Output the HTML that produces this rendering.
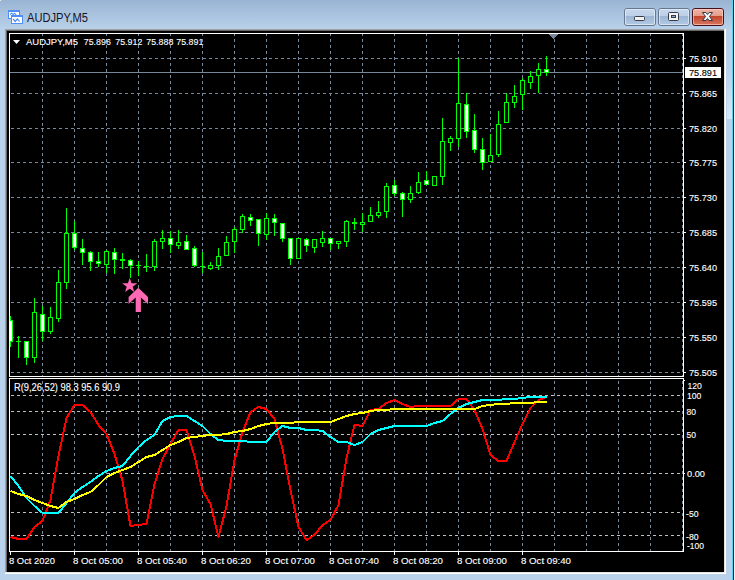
<!DOCTYPE html>
<html><head><meta charset="utf-8"><style>
html,body{margin:0;padding:0;}
body{width:735px;height:580px;overflow:hidden;position:relative;background:#b9d1ea;font-family:"Liberation Sans",sans-serif;}
.tb{position:absolute;left:0;top:0;width:735px;height:29px;background:linear-gradient(#99b4d3,#b9d1ea);}
</style></head><body>
<div class="tb"></div>
<svg style="position:absolute;left:0;top:0" width="735" height="580" viewBox="0 0 735 580">
<rect x="5" y="29" width="721" height="545" fill="#fff"/>
<rect x="5" y="29" width="720" height="544" fill="#e3e3e3"/>
<rect x="5" y="29" width="719" height="543" fill="#a0a0a0"/>
<rect x="6" y="30" width="718" height="542" fill="#696969"/>
<rect x="7" y="31" width="717" height="541" fill="#000"/>
<defs><linearGradient id="gs" x1="0" y1="0" x2="0" y2="1"><stop offset="0" stop-color="#b9d1ea"/><stop offset="1" stop-color="#dae7f4"/></linearGradient></defs>
<rect x="727" y="70" width="5" height="49" fill="url(#gs)"/>
<rect x="0" y="0" width="1" height="1" fill="#f4efe4"/>
<rect x="732" y="0" width="1" height="580" fill="#5bd0f0"/>
<rect x="733" y="0" width="1" height="580" fill="#1a2a3a"/>
<rect x="734" y="0" width="1" height="580" fill="#e8eef4"/>
</svg>
<svg style="position:absolute;left:0;top:0" width="735" height="580" viewBox="0 0 735 580">
<defs>
<linearGradient id="gb" x1="0" y1="0" x2="0" y2="1"><stop offset="0" stop-color="#c8d9ee"/><stop offset="0.45" stop-color="#bccfe7"/><stop offset="0.46" stop-color="#9cb5d3"/><stop offset="1" stop-color="#b4cbe6"/></linearGradient>
<linearGradient id="gr" x1="0" y1="0" x2="0" y2="1"><stop offset="0" stop-color="#efb5a5"/><stop offset="0.45" stop-color="#e49c8a"/><stop offset="0.46" stop-color="#c2442a"/><stop offset="1" stop-color="#da7a62"/></linearGradient>
</defs>
<rect x="624.5" y="8.5" width="31" height="17" rx="2.5" fill="url(#gb)" stroke="#66778e"/>
<rect x="625.5" y="9.5" width="29" height="15" rx="1.5" fill="none" stroke="#e6f0fa" stroke-opacity="0.7"/>
<rect x="658.5" y="8.5" width="31" height="17" rx="2.5" fill="url(#gb)" stroke="#66778e"/>
<rect x="659.5" y="9.5" width="29" height="15" rx="1.5" fill="none" stroke="#e6f0fa" stroke-opacity="0.7"/>
<rect x="692.5" y="8.5" width="31" height="17" rx="2.5" fill="url(#gr)" stroke="#46101e"/>
<rect x="693.5" y="9.5" width="29" height="15" rx="1.5" fill="none" stroke="#ffd8cc" stroke-opacity="0.6"/>
<rect x="634.5" y="16.5" width="10" height="4" rx="1" fill="#f2f2f0" stroke="#363c4c"/>
<rect x="668.5" y="12.5" width="10" height="8" rx="1" fill="#f2f2f0" stroke="#363c4c"/>
<rect x="671.5" y="15.5" width="4" height="2" fill="#8eaacb" stroke="#363c4c"/>
<path d="M702.5 12.5H705.9L707.5 14.4L709.1 12.5H712.5L709.5 16.5L712.5 20.5H709.1L707.5 18.6L705.9 20.5H702.5L705.5 16.5Z" fill="#f2f2f2" stroke="#2e3848" stroke-width="1" stroke-linejoin="round"/>

<g shape-rendering="crispEdges">
<rect x="8.5" y="10.5" width="11" height="8" fill="#fff" stroke="#4f8ef7"/>
<rect x="8" y="10" width="12" height="2" fill="#4f8ef7"/>
<rect x="11.5" y="15.5" width="11" height="8" fill="#fff" stroke="#4f8ef7"/>
<rect x="11" y="15" width="12" height="2" fill="#4f8ef7"/>
</g>
<path d="M13 18.8L15.2 21.5L17.3 18.8L19.6 21.5" fill="none" stroke="#3f86f5" stroke-width="1.1"/>
<path d="M10 14.6L11.6 13.2L13.2 14.6L14.6 13.2L16.2 15" fill="none" stroke="#3f86f5" stroke-width="1.1"/>
</svg>
<svg style="position:absolute;left:0;top:0" width="735" height="580" viewBox="0 0 735 580" shape-rendering="crispEdges">
<defs><clipPath id="cm"><rect x="10" y="34" width="673" height="342"/></clipPath><clipPath id="ci"><rect x="10" y="379" width="673" height="172"/></clipPath></defs><g clip-path="url(#cm)" fill="none" stroke="#778899" stroke-width="1" stroke-dasharray="3 3"><path d="M11 58.5H683 M11 93.5H683 M11 128.5H683 M11 162.5H683 M11 197.5H683 M11 232.5H683 M11 267.5H683 M11 302.5H683 M11 337.5H683 M11 372.5H683"/><path d="M42.5 33V376 M74.5 33V376 M106.5 33V376 M138.5 33V376 M170.5 33V376 M202.5 33V376 M234.5 33V376 M266.5 33V376 M298.5 33V376 M330.5 33V376 M362.5 33V376 M394.5 33V376 M426.5 33V376 M458.5 33V376 M490.5 33V376 M522.5 33V376 M554.5 33V376 M586.5 33V376 M618.5 33V376 M650.5 33V376 M682.5 33V376"/></g><path d="M10 72.5H683" stroke="#778899" stroke-width="1"/><g clip-path="url(#cm)"><rect x="8" y="320" width="5" height="22" fill="#fff"/><rect x="24" y="341" width="5" height="17" fill="#fff"/><rect x="32" y="312" width="5" height="46" fill="#000"/><rect x="40" y="314" width="5" height="18" fill="#fff"/><rect x="48" y="317" width="5" height="15" fill="#000"/><rect x="56" y="282" width="5" height="37" fill="#000"/><rect x="64" y="233" width="5" height="50" fill="#000"/><rect x="72" y="233" width="5" height="15" fill="#fff"/><rect x="80" y="248" width="5" height="5" fill="#fff"/><rect x="88" y="252" width="5" height="10" fill="#fff"/><rect x="96" y="261" width="5" height="3" fill="#fff"/><rect x="104" y="251" width="5" height="14" fill="#000"/><rect x="112" y="252" width="5" height="8" fill="#fff"/><rect x="120" y="259" width="5" height="2" fill="#fff"/><rect x="128" y="260" width="5" height="6" fill="#fff"/><rect x="152" y="241" width="5" height="26" fill="#000"/><rect x="160" y="238" width="5" height="4" fill="#000"/><rect x="168" y="238" width="5" height="7" fill="#fff"/><rect x="176" y="242" width="5" height="4" fill="#000"/><rect x="184" y="241" width="5" height="9" fill="#fff"/><rect x="192" y="248" width="5" height="18" fill="#fff"/><rect x="208" y="265" width="5" height="4" fill="#000"/><rect x="216" y="256" width="5" height="10" fill="#000"/><rect x="224" y="242" width="5" height="14" fill="#000"/><rect x="232" y="229" width="5" height="13" fill="#000"/><rect x="240" y="216" width="5" height="14" fill="#000"/><rect x="248" y="217" width="5" height="4" fill="#fff"/><rect x="256" y="219" width="5" height="15" fill="#fff"/><rect x="264" y="218" width="5" height="17" fill="#000"/><rect x="272" y="218" width="5" height="5" fill="#fff"/><rect x="280" y="223" width="5" height="16" fill="#fff"/><rect x="288" y="238" width="5" height="21" fill="#fff"/><rect x="296" y="238" width="5" height="21" fill="#000"/><rect x="304" y="239" width="5" height="7" fill="#fff"/><rect x="312" y="239" width="5" height="9" fill="#000"/><rect x="320" y="238" width="5" height="5" fill="#000"/><rect x="328" y="238" width="5" height="6" fill="#fff"/><rect x="336" y="241" width="5" height="3" fill="#000"/><rect x="344" y="221" width="5" height="21" fill="#000"/><rect x="352" y="222" width="5" height="2" fill="#000"/><rect x="360" y="222" width="5" height="3" fill="#000"/><rect x="368" y="215" width="5" height="7" fill="#000"/><rect x="376" y="212" width="5" height="4" fill="#000"/><rect x="384" y="186" width="5" height="26" fill="#000"/><rect x="392" y="185" width="5" height="9" fill="#fff"/><rect x="400" y="193" width="5" height="7" fill="#fff"/><rect x="408" y="193" width="5" height="7" fill="#000"/><rect x="416" y="182" width="5" height="11" fill="#000"/><rect x="424" y="180" width="5" height="5" fill="#fff"/><rect x="432" y="176" width="5" height="10" fill="#000"/><rect x="440" y="141" width="5" height="36" fill="#000"/><rect x="448" y="138" width="5" height="5" fill="#000"/><rect x="456" y="103" width="5" height="36" fill="#000"/><rect x="464" y="104" width="5" height="28" fill="#fff"/><rect x="472" y="130" width="5" height="20" fill="#fff"/><rect x="480" y="149" width="5" height="14" fill="#fff"/><rect x="488" y="155" width="5" height="7" fill="#000"/><rect x="496" y="124" width="5" height="31" fill="#000"/><rect x="504" y="102" width="5" height="21" fill="#000"/><rect x="512" y="96" width="5" height="7" fill="#000"/><rect x="520" y="80" width="5" height="15" fill="#000"/><rect x="528" y="76" width="5" height="7" fill="#000"/><rect x="536" y="69" width="5" height="7" fill="#000"/><rect x="544" y="69" width="5" height="4" fill="#fff"/><path d="M10.5 316V320 M10.5 342V347 M8.5 320.5H12.5V341.5H8.5Z M18.5 336V341 M18.5 342V358 M16 341.5H21 M26.5 358V365 M24.5 341.5H28.5V357.5H24.5Z M34.5 298V312 M34.5 358V363 M32.5 312.5H36.5V357.5H32.5Z M42.5 306V314 M42.5 332V341 M40.5 314.5H44.5V331.5H40.5Z M50.5 307V317 M50.5 332V334 M48.5 317.5H52.5V331.5H48.5Z M58.5 270V282 M58.5 319V322 M56.5 282.5H60.5V318.5H56.5Z M66.5 208V233 M66.5 283V289 M64.5 233.5H68.5V282.5H64.5Z M74.5 221V233 M74.5 248V250 M72.5 233.5H76.5V247.5H72.5Z M82.5 239V248 M82.5 253V265 M80.5 248.5H84.5V252.5H80.5Z M90.5 251V252 M90.5 262V271 M88.5 252.5H92.5V261.5H88.5Z M98.5 252V261 M98.5 264V267 M96.5 261.5H100.5V263.5H96.5Z M106.5 250V251 M106.5 265V273 M104.5 251.5H108.5V264.5H104.5Z M114.5 248V252 M114.5 260V274 M112.5 252.5H116.5V259.5H112.5Z M122.5 253V259 M122.5 261V269 M120.5 259.5H124.5V260.5H120.5Z M130.5 259V260 M130.5 266V278 M128.5 260.5H132.5V265.5H128.5Z M138.5 261V265 M138.5 266V276 M136 265.5H141 M146.5 254V266 M146.5 267V272 M144 266.5H149 M154.5 239V241 M154.5 267V271 M152.5 241.5H156.5V266.5H152.5Z M162.5 230V238 M162.5 242V249 M160.5 238.5H164.5V241.5H160.5Z M170.5 231V238 M170.5 245V253 M168.5 238.5H172.5V244.5H168.5Z M178.5 230V242 M178.5 246V249 M176.5 242.5H180.5V245.5H176.5Z M186.5 235V241 M184.5 241.5H188.5V249.5H184.5Z M194.5 246V248 M194.5 266V267 M192.5 248.5H196.5V265.5H192.5Z M202.5 252V266 M202.5 267V273 M200 266.5H205 M210.5 262V265 M210.5 269V270 M208.5 265.5H212.5V268.5H208.5Z M218.5 248V256 M218.5 266V270 M216.5 256.5H220.5V265.5H216.5Z M226.5 236V242 M224.5 242.5H228.5V255.5H224.5Z M234.5 227V229 M234.5 242V253 M232.5 229.5H236.5V241.5H232.5Z M242.5 214V216 M242.5 230V233 M240.5 216.5H244.5V229.5H240.5Z M250.5 214V217 M250.5 221V226 M248.5 217.5H252.5V220.5H248.5Z M258.5 234V246 M256.5 219.5H260.5V233.5H256.5Z M266.5 213V218 M266.5 235V240 M264.5 218.5H268.5V234.5H264.5Z M274.5 214V218 M274.5 223V236 M272.5 218.5H276.5V222.5H272.5Z M282.5 239V242 M280.5 223.5H284.5V238.5H280.5Z M290.5 259V265 M288.5 238.5H292.5V258.5H288.5Z M298.5 259V259 M296.5 238.5H300.5V258.5H296.5Z M306.5 238V239 M306.5 246V252 M304.5 239.5H308.5V245.5H304.5Z M314.5 248V253 M312.5 239.5H316.5V247.5H312.5Z M322.5 231V238 M322.5 243V247 M320.5 238.5H324.5V242.5H320.5Z M330.5 244V250 M328.5 238.5H332.5V243.5H328.5Z M338.5 244V249 M336.5 241.5H340.5V243.5H336.5Z M346.5 220V221 M346.5 242V247 M344.5 221.5H348.5V241.5H344.5Z M354.5 218V222 M354.5 224V230 M352.5 222.5H356.5V223.5H352.5Z M362.5 213V222 M362.5 225V232 M360.5 222.5H364.5V224.5H360.5Z M370.5 207V215 M368.5 215.5H372.5V221.5H368.5Z M378.5 201V212 M378.5 216V218 M376.5 212.5H380.5V215.5H376.5Z M386.5 183V186 M386.5 212V218 M384.5 186.5H388.5V211.5H384.5Z M394.5 180V185 M394.5 194V196 M392.5 185.5H396.5V193.5H392.5Z M402.5 192V193 M402.5 200V217 M400.5 193.5H404.5V199.5H400.5Z M410.5 186V193 M410.5 200V203 M408.5 193.5H412.5V199.5H408.5Z M418.5 172V182 M418.5 193V194 M416.5 182.5H420.5V192.5H416.5Z M426.5 171V180 M424.5 180.5H428.5V184.5H424.5Z M432.5 176.5H436.5V185.5H432.5Z M442.5 118V141 M442.5 177V185 M440.5 141.5H444.5V176.5H440.5Z M450.5 136V138 M450.5 143V151 M448.5 138.5H452.5V142.5H448.5Z M458.5 58V103 M458.5 139V147 M456.5 103.5H460.5V138.5H456.5Z M466.5 93V104 M466.5 132V138 M464.5 104.5H468.5V131.5H464.5Z M474.5 114V130 M474.5 150V153 M472.5 130.5H476.5V149.5H472.5Z M482.5 138V149 M482.5 163V170 M480.5 149.5H484.5V162.5H480.5Z M490.5 134V155 M490.5 162V162 M488.5 155.5H492.5V161.5H488.5Z M498.5 111V124 M498.5 155V157 M496.5 124.5H500.5V154.5H496.5Z M506.5 93V102 M504.5 102.5H508.5V122.5H504.5Z M514.5 85V96 M514.5 103V108 M512.5 96.5H516.5V102.5H512.5Z M522.5 78V80 M522.5 95V110 M520.5 80.5H524.5V94.5H520.5Z M530.5 71V76 M530.5 83V89 M528.5 76.5H532.5V82.5H528.5Z M538.5 63V69 M538.5 76V93 M536.5 69.5H540.5V75.5H536.5Z M546.5 56V69 M546.5 73V76 M544.5 69.5H548.5V72.5H544.5Z" fill="none" stroke="#00ff00" stroke-width="1"/></g><g clip-path="url(#ci)" fill="none" stroke-width="1" stroke-dasharray="3 3"><path d="M42.5 381V551 M74.5 381V551 M106.5 381V551 M138.5 381V551 M170.5 381V551 M202.5 381V551 M234.5 381V551 M266.5 381V551 M298.5 381V551 M330.5 381V551 M362.5 381V551 M394.5 381V551 M426.5 381V551 M458.5 381V551 M490.5 381V551 M522.5 381V551 M554.5 381V551 M586.5 381V551 M618.5 381V551 M650.5 381V551 M682.5 381V551" stroke="#778899"/><path d="M11 395.5H683 M11 411.5H683 M11 434.5H683 M11 473.5H683 M11 512.5H683 M11 535.5H683" stroke="#c0c0c0"/></g><g clip-path="url(#ci)" fill="none" stroke-width="2" stroke-linejoin="round"><polyline points="10.5,537 18.5,539 26.5,539 34.5,527 42.5,521 50.5,500 58.5,456 66.5,418 74.5,405 82.5,405 90.5,412 98.5,425 106.5,434 114.5,454 122.5,481 130.5,526 138.5,525 146.5,524 154.5,484 162.5,459 170.5,444 178.5,430 186.5,430 194.5,456 202.5,490 210.5,504 218.5,537 226.5,506 234.5,460 242.5,432 250.5,412 258.5,407 266.5,409 274.5,419 282.5,449 290.5,490 298.5,527 306.5,540 314.5,535 322.5,525 330.5,520 338.5,505 346.5,458 354.5,425 362.5,426 370.5,410 378.5,409 386.5,403 394.5,400 402.5,404 410.5,407 418.5,406 426.5,406 434.5,406 442.5,406 450.5,406 458.5,399 466.5,399 474.5,410 482.5,429 490.5,455 498.5,461 506.5,461 514.5,442 522.5,424 530.5,408 538.5,400 546.5,397" stroke="#ff0000"/><polyline points="10.5,476 18.5,486 26.5,498 34.5,506 42.5,513 50.5,513 58.5,513 66.5,503 74.5,493 82.5,487 90.5,482 98.5,476 106.5,471 114.5,468 122.5,466 130.5,456 138.5,447 146.5,440 154.5,435 162.5,421 170.5,417 178.5,416 186.5,416 194.5,421 202.5,426 210.5,434 218.5,440 226.5,441 234.5,441 242.5,441 250.5,442 258.5,442 266.5,442 274.5,432 282.5,426 290.5,428 298.5,428 306.5,430 314.5,430 322.5,431 330.5,437 338.5,442 346.5,442 354.5,445 362.5,442 370.5,434 378.5,430 386.5,428 394.5,426 402.5,426 410.5,426 418.5,426 426.5,426 434.5,423 442.5,421 450.5,414 458.5,408 466.5,404 474.5,402 482.5,400 490.5,400 498.5,400 506.5,399 514.5,399 522.5,398 530.5,397 538.5,397 546.5,397" stroke="#00ffff"/><polyline points="10.5,491 18.5,494 26.5,496 34.5,500 42.5,503 50.5,506 58.5,508 66.5,502 74.5,499 82.5,495 90.5,492 98.5,485 106.5,477 114.5,473 122.5,470 130.5,467 138.5,462 146.5,457 154.5,455 162.5,450 170.5,445 178.5,442 186.5,438 194.5,437 202.5,436 210.5,435 218.5,435 226.5,434 234.5,432 242.5,431 250.5,429 258.5,426 266.5,424 274.5,423 282.5,423 290.5,423 298.5,422 306.5,422 314.5,422 322.5,422 330.5,422 338.5,419 346.5,416 354.5,414 362.5,413 370.5,411 378.5,410 386.5,410 394.5,409 402.5,409 410.5,409 418.5,409 426.5,409 434.5,409 442.5,409 450.5,409 458.5,409 466.5,409 474.5,409 482.5,406 490.5,405 498.5,404 506.5,404 514.5,403 522.5,403 530.5,403 538.5,402 546.5,402" stroke="#ffff00"/></g><path d="M548 34H558L553 39Z" fill="#778899"/><rect x="685" y="67" width="36" height="11" fill="#fff"/><rect x="9.5" y="33.5" width="674" height="343" fill="none" stroke="#fff"/><rect x="9.5" y="378.5" width="674" height="173" fill="none" stroke="#fff"/><path d="M684 58.5h2 M684 93.5h2 M684 128.5h2 M684 162.5h2 M684 197.5h2 M684 232.5h2 M684 267.5h2 M684 302.5h2 M684 337.5h2 M684 372.5h2 M684 380.5h1 M684 473.5h1 M10.5 552v3 M74.5 552v3 M138.5 552v3 M202.5 552v3 M266.5 552v3 M330.5 552v3 M394.5 552v3 M458.5 552v3 M522.5 552v3" stroke="#fff" stroke-width="1"/>
</svg>
<svg style="position:absolute;left:0;top:0" width="735" height="580" viewBox="0 0 735 580" font-family='"Liberation Sans", sans-serif'>
<path d="M13 40h7l-3.5 4z" fill="#fff"/>
<text x="27" y="22" font-size="12" fill="#141428" text-anchor="start" textLength="61" lengthAdjust="spacingAndGlyphs">AUDJPY,M5</text><text x="26" y="45" font-size="9.95" fill="#fff" text-anchor="start" textLength="52" lengthAdjust="spacingAndGlyphs" stroke="#fff" stroke-width="0.12">AUDJPY,M5</text><text x="83.8" y="45" font-size="9.95" fill="#fff" text-anchor="start" textLength="27" lengthAdjust="spacingAndGlyphs" stroke="#fff" stroke-width="0.12">75.896</text><text x="115.3" y="45" font-size="9.95" fill="#fff" text-anchor="start" textLength="27" lengthAdjust="spacingAndGlyphs" stroke="#fff" stroke-width="0.12">75.912</text><text x="146.3" y="45" font-size="9.95" fill="#fff" text-anchor="start" textLength="27" lengthAdjust="spacingAndGlyphs" stroke="#fff" stroke-width="0.12">75.888</text><text x="176.3" y="45" font-size="9.95" fill="#fff" text-anchor="start" textLength="27" lengthAdjust="spacingAndGlyphs" stroke="#fff" stroke-width="0.12">75.891</text><text x="689" y="62" font-size="9.95" fill="#fff" text-anchor="start" textLength="28" lengthAdjust="spacingAndGlyphs" stroke="#fff" stroke-width="0.12">75.910</text><text x="689" y="97" font-size="9.95" fill="#fff" text-anchor="start" textLength="28" lengthAdjust="spacingAndGlyphs" stroke="#fff" stroke-width="0.12">75.865</text><text x="689" y="132" font-size="9.95" fill="#fff" text-anchor="start" textLength="28" lengthAdjust="spacingAndGlyphs" stroke="#fff" stroke-width="0.12">75.820</text><text x="689" y="166" font-size="9.95" fill="#fff" text-anchor="start" textLength="28" lengthAdjust="spacingAndGlyphs" stroke="#fff" stroke-width="0.12">75.775</text><text x="689" y="201" font-size="9.95" fill="#fff" text-anchor="start" textLength="28" lengthAdjust="spacingAndGlyphs" stroke="#fff" stroke-width="0.12">75.730</text><text x="689" y="236" font-size="9.95" fill="#fff" text-anchor="start" textLength="28" lengthAdjust="spacingAndGlyphs" stroke="#fff" stroke-width="0.12">75.685</text><text x="689" y="271" font-size="9.95" fill="#fff" text-anchor="start" textLength="28" lengthAdjust="spacingAndGlyphs" stroke="#fff" stroke-width="0.12">75.640</text><text x="689" y="306" font-size="9.95" fill="#fff" text-anchor="start" textLength="28" lengthAdjust="spacingAndGlyphs" stroke="#fff" stroke-width="0.12">75.595</text><text x="689" y="341" font-size="9.95" fill="#fff" text-anchor="start" textLength="28" lengthAdjust="spacingAndGlyphs" stroke="#fff" stroke-width="0.12">75.550</text><text x="689" y="376" font-size="9.95" fill="#fff" text-anchor="start" textLength="28" lengthAdjust="spacingAndGlyphs" stroke="#fff" stroke-width="0.12">75.505</text><text x="689" y="76" font-size="9.8" fill="#000" text-anchor="start" textLength="28" lengthAdjust="spacingAndGlyphs" stroke="#000" stroke-width="0.12">75.891</text><path d="M129.7 277.9L131.5 283.2L137.3 283.2L132.7 286.7L134.3 292.1L129.7 288.8L125.1 292.1L126.7 286.7L122.1 283.2L127.9 283.2Z" fill="#ff69b4"/><path d="M138.3 287.8L148 297V304L140.9 297.4V312H135.7V297.4L128.6 304V297Z" fill="#ff69b4"/><text x="14" y="391" font-size="10" fill="#fff" text-anchor="start" textLength="106" lengthAdjust="spacingAndGlyphs" stroke="#fff" stroke-width="0.12">R(9,26,52) 98.3 95.6 90.9</text><text x="687.5" y="389" font-size="9" fill="#fff" text-anchor="start" textLength="14.3" lengthAdjust="spacingAndGlyphs" stroke="#fff" stroke-width="0.12">120</text><text x="687" y="399" font-size="9" fill="#fff" text-anchor="start" textLength="14.3" lengthAdjust="spacingAndGlyphs" stroke="#fff" stroke-width="0.12">100</text><text x="686.5" y="415" font-size="9" fill="#fff" text-anchor="start" textLength="9.5" lengthAdjust="spacingAndGlyphs" stroke="#fff" stroke-width="0.12">80</text><text x="686.5" y="438" font-size="9" fill="#fff" text-anchor="start" textLength="9.5" lengthAdjust="spacingAndGlyphs" stroke="#fff" stroke-width="0.12">50</text><text x="687" y="477" font-size="9" fill="#fff" text-anchor="start" textLength="18" lengthAdjust="spacingAndGlyphs" stroke="#fff" stroke-width="0.12">0.00</text><text x="686" y="517" font-size="9" fill="#fff" text-anchor="start" textLength="12.6" lengthAdjust="spacingAndGlyphs" stroke="#fff" stroke-width="0.12">-50</text><text x="686" y="540" font-size="9" fill="#fff" text-anchor="start" textLength="12.6" lengthAdjust="spacingAndGlyphs" stroke="#fff" stroke-width="0.12">-80</text><text x="687" y="549" font-size="9" fill="#fff" text-anchor="start" textLength="17" lengthAdjust="spacingAndGlyphs" stroke="#fff" stroke-width="0.12">-100</text><text x="9" y="564" font-size="9" fill="#fff" text-anchor="start" textLength="46" lengthAdjust="spacingAndGlyphs" stroke="#fff" stroke-width="0.12">8 Oct 2020</text><text x="73" y="564" font-size="9" fill="#fff" text-anchor="start" textLength="50" lengthAdjust="spacingAndGlyphs" stroke="#fff" stroke-width="0.12">8 Oct 05:00</text><text x="137" y="564" font-size="9" fill="#fff" text-anchor="start" textLength="50" lengthAdjust="spacingAndGlyphs" stroke="#fff" stroke-width="0.12">8 Oct 05:40</text><text x="201" y="564" font-size="9" fill="#fff" text-anchor="start" textLength="50" lengthAdjust="spacingAndGlyphs" stroke="#fff" stroke-width="0.12">8 Oct 06:20</text><text x="265" y="564" font-size="9" fill="#fff" text-anchor="start" textLength="50" lengthAdjust="spacingAndGlyphs" stroke="#fff" stroke-width="0.12">8 Oct 07:00</text><text x="329" y="564" font-size="9" fill="#fff" text-anchor="start" textLength="50" lengthAdjust="spacingAndGlyphs" stroke="#fff" stroke-width="0.12">8 Oct 07:40</text><text x="393" y="564" font-size="9" fill="#fff" text-anchor="start" textLength="50" lengthAdjust="spacingAndGlyphs" stroke="#fff" stroke-width="0.12">8 Oct 08:20</text><text x="457" y="564" font-size="9" fill="#fff" text-anchor="start" textLength="50" lengthAdjust="spacingAndGlyphs" stroke="#fff" stroke-width="0.12">8 Oct 09:00</text><text x="521" y="564" font-size="9" fill="#fff" text-anchor="start" textLength="50" lengthAdjust="spacingAndGlyphs" stroke="#fff" stroke-width="0.12">8 Oct 09:40</text>
</svg>
</body></html>
